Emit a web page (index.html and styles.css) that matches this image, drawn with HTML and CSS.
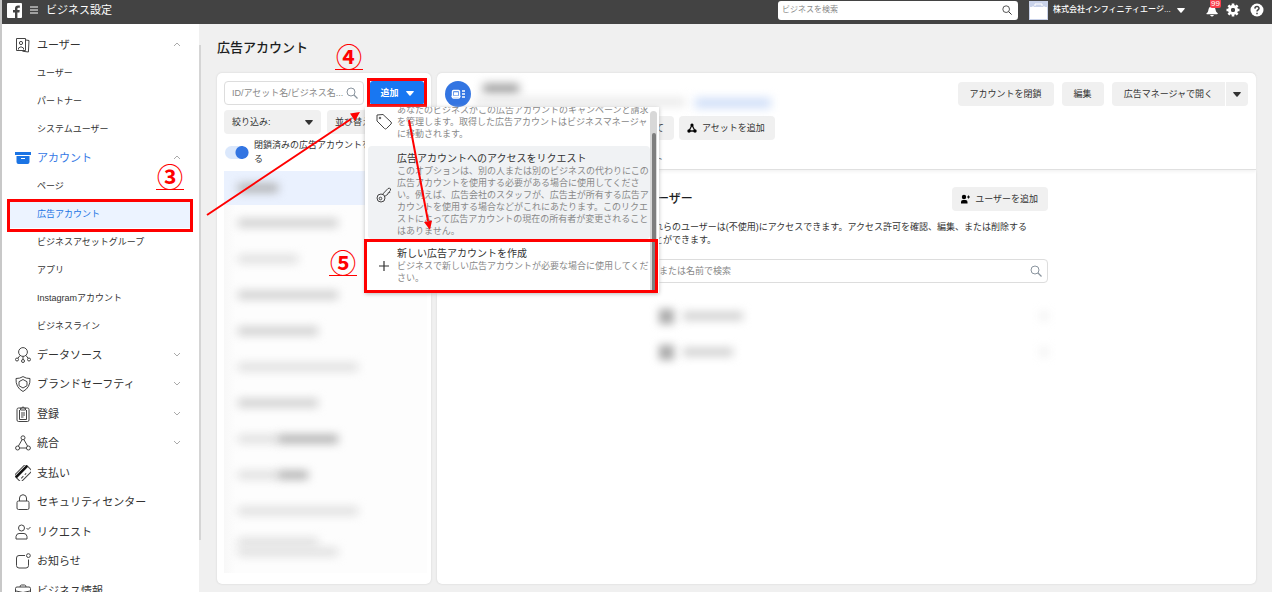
FILE: index.html
```html
<!DOCTYPE html>
<html lang="ja">
<head>
<meta charset="utf-8">
<title>ビジネス設定</title>
<link rel="stylesheet" href="styles.css">
</head>
<body>
<svg class="sprite" aria-hidden="true">
  <symbol id="up" viewBox="0 0 8 5"><path d="M1 4l3-3 3 3" fill="none" stroke="#aaa"/></symbol>
  <symbol id="down" viewBox="0 0 8 5"><path d="M1 1l3 3 3-3" fill="none" stroke="#aaa"/></symbol>
  <symbol id="caret" viewBox="0 0 8 5"><path d="M.6 0h6.8q.8.4.2 1L4.600 4.600q-.6.5-1.200 0L.4 1Q-.2.4.6 0z" fill="currentColor"/></symbol>
  <symbol id="search" viewBox="0 0 12 12"><circle cx="5" cy="5" r="4" fill="none" stroke="currentColor"/><path d="M8 8l3.500 3.500" stroke="currentColor" stroke-width="1.200"/></symbol>
</svg>

<header class="topbar">
  <svg class="logo" viewBox="0 0 15 15"><rect width="15" height="15" rx="1" fill="#fff"/><path d="M8 15V9.500H6V7h2V5.500C8 3.600 9.100 2.500 11 2.500h1.800v2.200h-1.200c-.9 0-1.200.4-1.200 1.200V7h2.300l-.3 2.500h-2V15z" fill="#434343"/></svg>
  <svg class="burger" viewBox="0 0 8 8"><path d="M0 1h8M0 4h8M0 7h8" stroke="#fff"/></svg>
  <span class="brand">ビジネス設定</span>
  <label class="top-search"><input type="text" aria-label="ビジネスを検索" placeholder="ビジネスを検索"><svg class="i10"><use href="#search"/></svg></label>
  <svg class="avatar" viewBox="0 0 19 19"><rect width="19" height="19" fill="#c9d2e9"/><path d="M1 6h17v12H1z" fill="#fff"/><path d="M6 5V3h7v2M4 7V5M15 7V5" fill="none" stroke="#fff"/></svg>
  <button class="account">株式会社インフィニティエージ...<svg class="caret"><use href="#caret"/></svg></button>
  <button class="bell" aria-label="通知"><svg viewBox="0 0 14 14"><path d="M2 10c1.500-1 1-3 2-5s5-2 6 0 .5 4 2.500 5q.8 1-.5 1.200H2Q.5 11 2 10zM5 12h4q-2 3-4 0z" fill="#fff"/></svg><span class="badge">99</span></button>
  <button class="round" aria-label="設定"><svg viewBox="0 0 14 14"><circle cx="7" cy="7" r="3.500" fill="none" stroke="#fff" stroke-width="3"/><path d="M7 .5v3M7 10.500v3M.5 7h3M10.500 7h3M2.400 2.400l2 2M9.600 9.600l2 2M2.400 11.600l2-2M9.600 4.400l2-2" stroke="#fff" stroke-width="2.600"/><circle cx="7" cy="7" r="2" fill="#434343"/></svg></button>
  <button class="round" aria-label="ヘルプ"><svg viewBox="0 0 14 14"><circle cx="7" cy="7" r="6.500" fill="#fff"/><path d="M4.900 5.600C5 2.700 9.200 3 9 5.500c-.1 1.300-2 1.400-2 3M7 9.800v1.500" fill="none" stroke="#434343" stroke-width="1.500"/></svg></button>
</header>

<div class="shell">
  <nav class="sidebar">
    <ul class="group first">
      <li><a class="cat" href="#"><svg viewBox="0 0 16 16"><path d="M1.500 1.500h9v12h-9zM11 3l3 .5-.6 11.500-6-.8" class="ln"/><circle cx="6" cy="6" r="1.600" class="ln"/><path d="M3.500 12.500V11q2.500-2.500 5 0v1.500" class="ln"/></svg><span>ユーザー</span><svg class="chev"><use href="#up"/></svg></a></li>
      <li><a class="sub" href="#">ユーザー</a></li>
      <li><a class="sub" href="#">パートナー</a></li>
      <li><a class="sub" href="#">システムユーザー</a></li>
    </ul>
    <ul class="group">
      <li><a class="cat on" href="#"><svg viewBox="0 0 16 16"><path d="M0 2h16v3H0zM1.500 6h13v6q0 2-2 2h-9q-2 0-2-2z" fill="#1b74e4"/><path d="M6 8.500h4" stroke="#fff"/></svg><span>アカウント</span><svg class="chev"><use href="#up"/></svg></a></li>
      <li><a class="sub" href="#">ページ</a></li>
      <li class="marked"><a class="sub active" href="#">広告アカウント</a></li>
      <li><a class="sub" href="#">ビジネスアセットグループ</a></li>
      <li><a class="sub" href="#">アプリ</a></li>
      <li><a class="sub" href="#">Instagramアカウント</a></li>
      <li><a class="sub" href="#">ビジネスライン</a></li>
    </ul>
    <ul class="group more">
      <li><a class="cat" href="#"><svg viewBox="0 0 16 16"><circle cx="8" cy="5" r="4.400" class="ln"/><circle cx="2" cy="12.500" r="1.500" class="ln"/><circle cx="8" cy="14" r="1.500" class="ln"/><circle cx="14" cy="12.500" r="1.500" class="ln"/><path d="M5 8.500l-2 2.700M8 9.500v3M11 8.500l2 2.700" class="ln"/></svg><span>データソース</span><svg class="chev"><use href="#down"/></svg></a></li>
      <li><a class="cat" href="#"><svg viewBox="0 0 16 16"><path d="M8 .6q3 2 7 1.900.5 9-7 13Q.5 11.500 1 2.500 5 2.600 8 .6z" class="ln"/><path d="M8 3.500l4 2.200v4L8 12 4 9.700v-4z" class="ln"/></svg><span>ブランドセーフティ</span><svg class="chev"><use href="#down"/></svg></a></li>
      <li><a class="cat" href="#"><svg viewBox="0 0 16 16"><rect x="2" y="2" width="12" height="13.500" rx="1.500" class="ln"/><path d="M4.500 4v9.500h7V4M5.500 4V2.200h1.200q1.300-3 2.600 0h1.200V4zM6 7h4M6 9h4M6 11h2.500" class="ln"/></svg><span>登録</span><svg class="chev"><use href="#down"/></svg></a></li>
      <li><a class="cat" href="#"><svg viewBox="0 0 16 16"><circle cx="8" cy="2.800" r="2" class="ln"/><circle cx="2.600" cy="13" r="2" class="ln"/><circle cx="13.400" cy="13" r="2" class="ln"/><path d="M7 4.800l-3.600 6.300M9 4.800l3.600 6.300M4.600 13h6.800" class="ln"/></svg><span>統合</span><svg class="chev"><use href="#down"/></svg></a></li>
      <li><a class="cat" href="#"><svg viewBox="0 0 16 16"><g transform="rotate(-45 8 8)"><rect x="0" y="3.500" width="16" height="9.500" rx="1.500" class="ln"/><path d="M0 6h16" stroke="#111" stroke-width="2.500"/><path d="M3 10.500h3M8 10.500h2" class="ln"/></g></svg><span>支払い</span></a></li>
      <li><a class="cat" href="#"><svg viewBox="0 0 16 16"><rect x="2" y="7" width="12" height="8.500" rx="1.500" class="ln"/><path d="M4.500 7V4q0-3 3.500-3.300Q11.500 1 11.500 4v3" class="ln"/></svg><span>セキュリティセンター</span></a></li>
      <li><a class="cat" href="#"><svg viewBox="0 0 16 16"><circle cx="6.500" cy="4" r="3" class="ln"/><path d="M1 15v-2.500Q1.500 9.500 4 9.500h5q2.500 0 3 3V15zM11.500 4l1.500 1.500L15.500 3" class="ln"/></svg><span>リクエスト</span></a></li>
      <li><a class="cat" href="#"><svg viewBox="0 0 16 16"><path d="M10 2.500H4Q1.500 2.500 1.500 5v7.500Q1.500 15 4 15h7q2.500 0 2.500-2.500V6.500" class="ln"/><circle cx="13.400" cy="2.600" r="1.900" class="ln"/></svg><span>お知らせ</span></a></li>
      <li><a class="cat" href="#"><svg viewBox="0 0 16 16"><path d="M2 4h12q1.500 0 1.500 1.500V14H.5V5.500Q.5 4 2 4zM5 4q0-2 1.500-2h3Q11 2 11 4M1 8q7 3 14 0" class="ln"/></svg><span>ビジネス情報</span></a></li>
    </ul>
    <span class="note note-3">③</span>
  </nav>
  <div class="nav-scroll"></div>

  <main class="content">
    <h1>広告アカウント</h1>
    <div class="panels">
      <section class="panel list-panel">
        <div class="row">
          <label class="field"><input type="text" aria-label="アセットを検索" placeholder="ID/アセット名/ビジネス名..."><svg class="i12"><use href="#search"/></svg></label>
          <div class="add-wrap">
            <button class="add">追加<svg class="caret"><use href="#caret"/></svg></button>
            <div class="add-frame"></div>
            <div class="menu">
              <div class="menu-items">
                <button class="item"><svg viewBox="0 0 16 16"><path d="M1 1l6-.5L15 8q1 1 0 2l-4.500 4.500q-1 1-2 0L1 7z" class="ln"/><circle cx="4" cy="4" r=".8" class="ln"/></svg><span class="item-text"><span class="desc">あなたのビジネスがこの広告アカウントのキャンペーンと請求を管理します。取得した広告アカウントはビジネスマネージャに移動されます。</span></span></button>
                <button class="item hover"><svg viewBox="0 0 16 16"><circle cx="5" cy="11" r="4" class="ln"/><circle cx="4.500" cy="11.500" r="1.300" class="ln"/><path d="M6.500 7.300L12 1.500q2-1 2.500.5t-1 2.200l.3 1.300-1.600.2-.2 1.300L8.700 9.500" class="ln"/></svg><span class="item-text"><span class="ttl">広告アカウントへのアクセスをリクエスト</span><span class="desc">このオプションは、別の人または別のビジネスの代わりにこの広告アカウントを使用する必要がある場合に使用してください。例えば、広告会社のスタッフが、広告主が所有する広告アカウントを使用する場合などがこれにあたります。このリクエストによって広告アカウントの現在の所有者が変更されることはありません。</span></span></button>
                <button class="item last"><svg viewBox="0 0 16 16"><path d="M8 3v10M3 8h10" stroke="#333" stroke-width="1.200"/></svg><span class="item-text"><span class="ttl">新しい広告アカウントを作成</span><span class="desc">ビジネスで新しい広告アカウントが必要な場合に使用してください。</span></span></button>
              </div>
              <div class="menu-track"><div class="menu-thumb"></div></div>
              <div class="item-frame"></div>
            </div>
          </div>
        </div>
        <div class="row filters">
          <button class="soft wide">絞り込み:<svg class="caret"><use href="#caret"/></svg></button>
          <button class="soft wide">並び替え:<svg class="caret"><use href="#caret"/></svg></button>
        </div>
        <label class="toggle"><input type="checkbox" checked><span>閉鎖済みの広告アカウントを表示する</span></label>
        <ul class="assets">
          <li class="sel"><i class="w40 dark"></i></li>
          <li><i class="w100"></i></li>
          <li><i class="w60 faint"></i></li>
          <li><i class="w100"></i></li>
          <li><i class="w80"></i></li>
          <li><i class="w120 faint"></i></li>
          <li><i class="w80"></i></li>
          <li><i class="w40 faint"></i><i class="w60 dark"></i></li>
          <li><i class="w40 faint"></i><i class="w30 dark"></i></li>
          <li><i class="w120 faint"></i></li>
          <li class="two"><i class="w80 faint"></i><i class="w100 faint"></i></li>
        </ul>
      </section>

      <section class="panel detail">
        <div class="detail-head">
          <div class="head-line">
            <svg class="ad-icon" viewBox="0 0 26 26"><circle cx="13" cy="13" r="13" fill="#3375e2"/><rect x="7.500" y="9.500" width="7" height="7.500" rx="1" fill="none" stroke="#fff" stroke-width="1.400"/><path d="M9.500 12h3v1.500h-3zM6.500 15.500h9M17 10h3M17 13h3M17 16h3" fill="#fff" stroke="#fff" stroke-width="1.300"/></svg>
            <div class="hidden-name"><i class="nm"></i><i class="id"></i><i class="lk"></i></div>
            <div class="actions">
              <button class="soft">アカウントを閉鎖</button>
              <button class="soft">編集</button>
              <div class="split"><button class="soft">広告マネージャで開く</button><button class="soft arrow" aria-label="その他"><svg class="caret"><use href="#caret"/></svg></button></div>
            </div>
          </div>
          <div class="asset-actions">
            <button class="soft tail">て</button>
            <button class="soft"><svg class="i10" viewBox="0 0 10 10"><path d="M5 2L2 8h6z" fill="none" stroke="#111" stroke-width="1.300"/><circle cx="5" cy="2" r="1.600"/><circle cx="2" cy="8" r="1.700"/><circle cx="8" cy="8" r="1.700"/></svg>アセットを追加</button>
          </div>
          <div class="tab">ト</div>
        </div>
        <div class="people">
          <div class="people-head"><h2>ユーザー</h2><button class="soft"><svg class="i10" viewBox="0 0 10 10"><circle cx="4" cy="3" r="2.200"/><path d="M1 9.500V8q0-2 2-2h2.500q2 0 2 2v1.500z"/><path d="M8.500 1.500v3M7 3h3" stroke="#111"/></svg>ユーザーを追加</button></div>
          <p>これらのユーザーは(不使用)にアクセスできます。アクセス許可を確認、編集、または削除することができます。</p>
          <label class="field"><input type="text" aria-label="ユーザーを検索" placeholder="IDまたは名前で検索"><svg class="i12"><use href="#search"/></svg></label>
          <ul class="persons"><li><i class="pic"></i><i class="w60"></i><i class="dots"></i></li><li><i class="pic"></i><i class="w50"></i><i class="dots"></i></li></ul>
        </div>
      </section>
    </div>
  </main>
</div>

<span class="note note-4">④</span>
<span class="note note-5">⑤</span>
<svg class="arrows" width="240" height="130" viewBox="200 105 240 130"><path d="M207 215L351 119M409 120l19 101" stroke="#f00" stroke-width="2"/><path d="M360 112l-5 9-5-7.500zM430 230l-6-8 8-1.500z" fill="#f00"/></svg>
</body>
</html>
```
FILE: styles.css
```css
* { box-sizing: border-box; }
body {
  margin: 0;
  height: 100vh;
  overflow: hidden;
  position: relative;
  display: flex;
  flex-direction: column;
  border-left: 2px solid #c8c8c8;
  background: #f0f0f0;
  color: #333;
  font: 9px/14px "Liberation Sans", "Noto Sans CJK JP", sans-serif;
}
ul { list-style: none; margin: 0; padding: 0; }
h1, h2, p { margin: 0; }
a { color: inherit; text-decoration: none; }
button, input { font: inherit; color: inherit; border: 0; padding: 0; background: none; outline: 0; }
button { display: flex; align-items: center; white-space: nowrap; }
svg { display: block; flex: none; }
.sprite { position: absolute; width: 0; height: 0; }
.ln { fill: none; stroke: #444; stroke-width: 1; }
.caret { width: 8px; height: 5px; }
.i10 { width: 10px; height: 10px; }
.i12 { width: 12px; height: 12px; }

.topbar {
  flex: none;
  height: 24px;
  padding: 0 8px 4px 5px;
  display: flex;
  align-items: center;
  background: #434343;
  color: #fff;
}
.logo { width: 15px; height: 15px; }
.burger { width: 8px; height: 8px; margin: 0 8px; }
.brand { font-size: 11px; }
.top-search {
  width: 240px;
  height: 19px;
  margin: 0 11px 0 auto;
  padding: 0 6px 0 4px;
  display: flex;
  align-items: center;
  background: #fff;
  border-radius: 3px;
  color: #333;
}
.top-search input { flex: 1; min-width: 0; font-size: 8px; }
input::placeholder { color: #888; opacity: 1; }
.avatar { width: 19px; height: 19px; }
.account { width: 132px; margin: 0 20px 0 5px; justify-content: space-between; font-size: 8px; font-weight: 500; }
.bell { position: relative; margin-right: 7px; }
.bell svg, .round svg { width: 14px; height: 14px; }
.badge {
  position: absolute;
  left: 5px;
  top: -4px;
  width: 11px;
  height: 9px;
  background: #fa3e4b;
  border-radius: 2px;
  font-size: 8px;
  line-height: 9px;
  text-align: center;
}
.round + .round { margin-left: 10px; }

.shell { flex: 1; min-height: 0; display: flex; }
.sidebar { position: relative; width: 197px; flex: none; background: #fff; overflow: hidden; }
.nav-scroll { width: 2px; flex: none; margin: 21px 0 52px; background: #d5d5d5; }
.first { padding-top: 6px; }
.cat {
  height: 29px;
  padding: 0 18px 0 13px;
  display: flex;
  align-items: center;
  gap: 6px;
  font-size: 11px;
}
.cat svg { width: 16px; height: 16px; }
.cat .chev { width: 8px; height: 5px; margin-left: auto; }
.on { color: #3578e5; }
.sub { display: block; height: 28px; line-height: 28px; padding-left: 27px; margin: 0 8px; }
.active { background: #ecf3ff; color: #1b74e4; }
.marked { position: relative; }
.marked::after { content: ""; position: absolute; inset: -1px 6px -4px 5px; border: 3px solid #f00; }
.more { display: grid; grid-auto-rows: 29px 30px; }

.note {
  position: absolute;
  width: 28px;
  height: 27px;
  border-bottom: 1px solid #f00;
  color: #f00;
  font: 700 26px/26px "Noto Sans CJK JP", sans-serif;
  text-align: center;
}
.note-3 { left: 154px; top: 139px; }
.note-4 { left: 333px; top: 43px; }
.note-5 { left: 327px; top: 249px; }
.note-4, .note-5, .arrows { z-index: 2; }
.arrows { position: absolute; left: 198px; top: 105px; pointer-events: none; }

.content { flex: 1; min-width: 0; padding: 14px 16px 8px; display: flex; flex-direction: column; }
h1 { font-size: 13px; line-height: 20px; font-weight: 500; color: #1c1e21; }
.panels { flex: 1; min-height: 0; margin-top: 15px; display: flex; gap: 6px; }
.panel { background: #fff; border-radius: 5px; box-shadow: 0 0 2px #ccc; }
.list-panel { width: 214px; flex: none; padding: 8px 4px 11px 7px; position: relative; z-index: 1; display: flex; flex-direction: column; }
.detail { flex: 1; min-width: 0; }
.row { display: flex; gap: 6px; }
.field {
  flex: 1;
  min-width: 0;
  height: 24px;
  padding: 0 5px 0 7px;
  display: flex;
  align-items: center;
  border: 1px solid #ddd;
  border-radius: 4px;
  color: #8a949e;
}
.field input { flex: 1; min-width: 0; }
.add-wrap { position: relative; width: 54px; margin-right: 3px; }
.add {
  width: 100%;
  height: 24px;
  justify-content: center;
  gap: 7px;
  background: #1877f2;
  border-radius: 3px;
  color: #fff;
  font-weight: 700;
}
.add-frame { position: absolute; inset: -3px -3px -2px -3px; border: 3px solid #f00; }
.soft { height: 24px; padding: 0 12px; gap: 5px; border-radius: 4px; background: #f0f0f0; color: #333; }
.filters { margin-top: 5px; }
.wide { width: 97px; flex: none; justify-content: space-between; padding: 0 8px; }
.toggle { display: flex; align-items: center; gap: 5px; margin: 4px 24px 5px 1px; }
.toggle input {
  appearance: none;
  flex: none;
  width: 24px;
  height: 13px;
  margin: 0;
  border-radius: 7px;
  background: radial-gradient(circle at 17px 50%, #3375e2 6px, transparent 7px) #dbe8fc;
}

.menu {
  position: absolute;
  left: -5px;
  top: 26px;
  width: 294px;
  height: 186px;
  padding-right: 2px;
  display: flex;
  background: #fff;
  box-shadow: 0 1px 4px #bbb;
}
.menu-items { flex: 1; overflow: hidden; padding-left: 3px; display: flex; flex-direction: column; justify-content: flex-end; gap: 1px; }
.item { flex: none; padding: 0 0 5px 8px; gap: 5px; text-align: left; white-space: normal; border-radius: 4px; }
.item svg { width: 16px; height: 16px; }
.item-text { width: 254px; flex: none; }
.ttl { display: block; font-size: 10px; line-height: 13px; color: #333; }
.desc { display: block; line-height: 12px; color: #888; }
.hover { padding-top: 6px; padding-bottom: 2px; background: #f0f2f4; }
.last { padding-top: 7px; padding-bottom: 9px; }
.menu-track { width: 7px; margin-top: 4px; padding: 22px 1px 0 2px; border-radius: 4px 4px 0 0; background: #d8d8d8; }
.menu-thumb { height: 100%; border-radius: 2px 2px 0 0; background: #7e7e7e; }
.item-frame { position: absolute; left: -1px; right: 1px; bottom: 0; height: 54px; border: 3px solid #f00; }

.assets { flex: 1; min-height: 0; overflow: hidden; background: linear-gradient(90deg, #f8f8f8, #fdfdfd 12px); }
.assets li { height: 36px; padding: 0 14px; display: flex; align-items: center; }
.assets .sel { background: #eaf1fe; height: 34px; }
.assets .two { flex-direction: column; align-items: flex-start; justify-content: center; gap: 2px; }
.assets i, .persons i, .hidden-name i { display: block; height: 8px; background: #ccc; filter: blur(5px); }
.assets .dark { background: #aaa; }
.assets .faint { background: #ddd; }
.w30 { width: 30px; }
.w40 { width: 40px; }
.w50 { width: 50px; }
.w60 { width: 60px; }
.w80 { width: 80px; }
.w100 { width: 100px; }
.w120 { width: 120px; }

.detail-head { height: 97px; padding: 8px 8px 0; border-bottom: 1px solid #e0e0e0; box-shadow: 0 2px 3px #f4f4f4; }
.head-line { display: flex; align-items: flex-start; height: 35px; }
.ad-icon { width: 26px; height: 26px; }
.hidden-name { position: relative; flex: 1; height: 30px; }
.hidden-name i { position: absolute; }
.hidden-name .nm { left: 12px; top: 3px; width: 36px; height: 9px; background: #999; }
.hidden-name .id { left: 4px; top: 17px; width: 210px; background: #e8e8e8; }
.hidden-name .lk { left: 224px; top: 17px; width: 76px; height: 10px; background: #cfdef8; }
.actions { display: flex; gap: 8px; padding-top: 1px; }
.split { display: flex; gap: 1px; }
.split .soft:first-child { border-radius: 4px 0 0 4px; }
.split .arrow { padding: 0 7px; border-radius: 0 4px 4px 0; }
.asset-actions { display: flex; gap: 5px; padding-left: 149px; }
.asset-actions .tail { width: 80px; justify-content: flex-end; }
.tab { margin-top: 12px; padding-left: 209px; }
.people { margin: 17px 208px 0; }
.people-head { display: flex; justify-content: space-between; align-items: center; }
h2 { font-size: 12px; font-weight: 500; color: #1c1e21; }
.people .soft, .asset-actions .soft { padding: 0 10px 0 8px; }
.people p { margin: 10px 0 12px; padding-right: 12px; line-height: 13px; }
.people .field { padding-left: 4px; }
.persons { padding: 15px 0 0 14px; }
.persons li { height: 36px; display: flex; align-items: center; gap: 9px; }
.persons .pic { width: 15px; height: 15px; background: #aaa; filter: blur(4px); }
.persons .dots { width: 8px; margin-left: auto; background: #eee; }
```
